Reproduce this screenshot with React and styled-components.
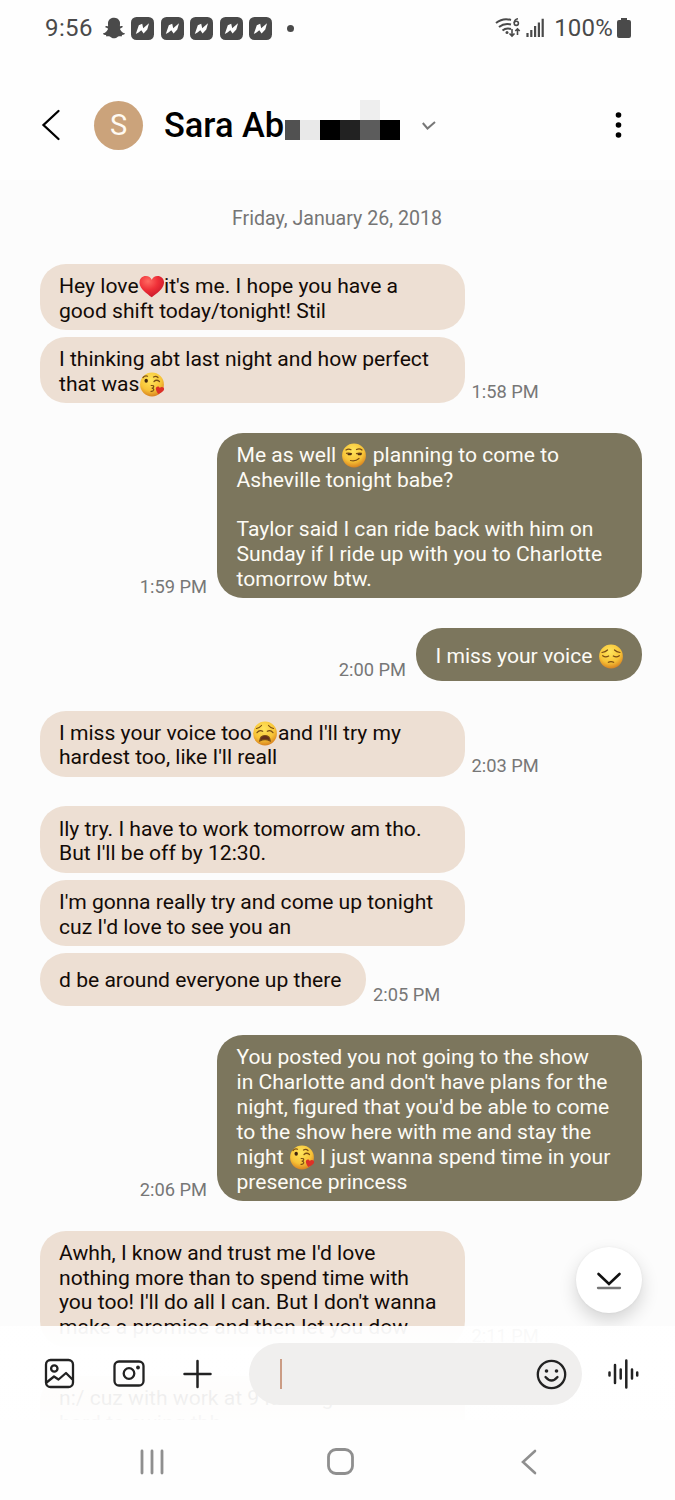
import React from "react";
import styled, { createGlobalStyle } from "styled-components";
import { FaSnapchatGhost } from "react-icons/fa";

const GlobalStyle = createGlobalStyle`
  * {
    box-sizing: border-box;
  }

  body {
    margin: 0;
    background: #ffffff;
    font-family: Roboto, "Liberation Sans", sans-serif;
  }

  svg {
    display: block;
    flex: none;
  }
`;

const Screen = styled.main`
  display: flex;
  flex-direction: column;
  width: 675px;
  height: 1500px;
  overflow: hidden;
  background: #fefefe;
`;

const StatusBar = styled.div`
  display: flex;
  align-items: center;
  justify-content: space-between;
  height: 56px;
  padding: 0 44px 0 45px;
  color: #4a4a4a;
  font-size: 24px;
`;

const StatusGroup = styled.div`
  display: flex;
  align-items: center;
  gap: ${(props) => props.$gap}px;

  .clock {
    width: 51px;
    letter-spacing: 0.4px;
  }
  .dot {
    width: 7px;
    height: 7px;
    margin-left: 8px;
    border-radius: 50%;
    background: #4a4a4a;
  }
  .level {
    margin-left: 5px;
    letter-spacing: 0.2px;
  }
`;

const Header = styled.header`
  display: flex;
  align-items: center;
  height: 124px;
  padding: 14px 45px 0 41px;

  .more {
    margin-left: auto;
  }
`;

const Avatar = styled.div`
  display: flex;
  align-items: center;
  justify-content: center;
  width: 49px;
  height: 49px;
  margin-left: 33px;
  border-radius: 50%;
  background: #cba37b;
  color: #fffaf2;
  font-size: 29px;
`;

const ContactName = styled.h1`
  width: 121px;
  margin: 0 0 0 21px;
  color: #000000;
  font-size: 34.4px;
  font-weight: 500;
  line-height: 40px;
  white-space: nowrap;
`;

const Redaction = styled.div`
  display: grid;
  grid-template-columns: 15px repeat(5, 20px);
  grid-template-rows: 20px 20px;
  margin: 0 22px 10px 0;
`;

const Block = styled.span`
  background: ${(props) => props.$shade};
`;

const Chat = styled.section`
  position: relative;
  display: flex;
  flex-direction: column;
  gap: 29.6px;
  height: 1240px;
  flex: none;
  padding: 26px 33px 0 39.5px;
  overflow: hidden;
  background: #fcfcfc;
`;

const DateLabel = styled.div`
  flex: none;
  height: 28px;
  margin: 0 4px 0 -3.5px;
  color: #757575;
  font-size: 19.6px;
  line-height: 26px;
  text-align: center;
`;

const Group = styled.div`
  display: flex;
  flex: none;
  flex-direction: column;
  gap: 6.8px;
`;

const MessageRow = styled.div`
  display: flex;
  flex-direction: ${(props) => (props.$mine ? "row-reverse" : "row")};
  align-items: flex-end;
  gap: ${(props) => (props.$mine ? "10px" : "7px")};
`;

const Bubble = styled.div`
  flex: none;
  width: ${(props) => props.$width || 425}px;
  padding: ${(props) =>
    props.$single ? "15.5px 19.5px 12.5px" : "10.1px 19.5px 6.6px"};
  border-radius: 26px;
  background: ${(props) => (props.$mine ? "#7c765d" : "#eddfd3")};
  color: ${(props) => (props.$mine ? "#fdfbf5" : "#130b07")};
  font-size: 21.1px;
  line-height: 24.85px;
  white-space: nowrap;

  svg {
    display: inline-block;
    margin: -4px 0 -2px;
    vertical-align: -4px;
  }
`;

const Time = styled.time`
  color: #777777;
  font-size: 18.3px;
  line-height: 22px;
`;

const ScrollButton = styled.button`
  position: absolute;
  top: 1067px;
  right: 33px;
  display: flex;
  align-items: center;
  justify-content: center;
  width: 66px;
  height: 66px;
  padding: 2px 0 0;
  border: 0;
  border-radius: 50%;
  background: #ffffff;
  box-shadow: 0 8px 18px rgba(0, 0, 0, 0.16), 0 0 3px rgba(0, 0, 0, 0.05);
`;

const Composer = styled.footer`
  position: relative;
  display: flex;
  flex: none;
  align-items: flex-start;
  height: 94px;
  margin-top: -94px;
  padding: 17px 34px 0 44px;
  background: linear-gradient(
    rgba(255, 255, 255, 0.94) 0%,
    rgba(255, 255, 255, 0.98) 25%,
    rgba(255, 255, 255, 0.97) 50%,
    rgba(255, 255, 255, 0.93) 75%,
    rgba(255, 255, 255, 0.97) 100%
  );
`;

const Tools = styled.div`
  display: flex;
  align-items: center;
  gap: 38px;
  height: 61px;
`;

const Field = styled.div`
  display: flex;
  align-items: center;
  justify-content: space-between;
  width: 333px;
  height: 62px;
  margin: 0 25px 0 37px;
  padding: 0 15px 0 31px;
  border-radius: 31px;
  background: #f0efee;
`;

const Caret = styled.span`
  width: 2px;
  height: 30px;
  background: #cb9c84;
`;

const NavBar = styled.nav`
  display: flex;
  align-items: center;
  justify-content: space-between;
  height: 80px;
  padding: 3px 138px 0 140px;
  background: #fefefe;

  .home {
    margin-right: 4px;
  }
`;

const Face = ({ children }) => (
  <svg width="26" height="25" viewBox="0 0 26 25">
    <defs>
      <radialGradient id="face" cx="45%" cy="30%" r="70%">
        <stop offset="0" stopColor="#ffe55c" />
        <stop offset="0.65" stopColor="#f7c337" />
        <stop offset="1" stopColor="#d98420" />
      </radialGradient>
    </defs>
    <circle cx="13" cy="12.5" r="11.9" fill="url(#face)" />
    <g fill="none" stroke="#7a4d14" strokeWidth="1.200" strokeLinecap="round">
      {children}
    </g>
  </svg>
);

const Heart = () => (
  <svg width="25.5" height="24" viewBox="0 0 26 24">
    <defs>
      <radialGradient id="heart" cx="35%" cy="25%" r="80%">
        <stop offset="0" stopColor="#ff6b62" />
        <stop offset="0.5" stopColor="#ef3038" />
        <stop offset="1" stopColor="#c5162b" />
      </radialGradient>
    </defs>
    <path
      fill="url(#heart)"
      d="M13 22.500C8 18.500 1 14 .5 7.800C.3 3.500 3.300 .7 7 .7C10 .7 12 2.300 13 4.500C14 2.300 16 .7 19 .7C22.700 .7 25.700 3.500 25.500 7.800C25 14 18 18.500 13 22.500Z"
    />
  </svg>
);

const Kiss = () => (
  <Face>
    <ellipse cx="7.2" cy="8.800" rx="1.700" ry="2" fill="#3f240f" stroke="none" />
    <path d="M4 5.500Q6 3.200 8.500 4.200M14.500 5Q17 3.700 19 5.500M15 9.500Q17.500 7 20.500 9.500" />
    <path d="M12.200 13.500Q15.500 13.300 14.500 15.200Q14 16.200 12.700 16.200Q15.300 16.500 14.600 18.200Q14 19.500 12 19.300" />
    <path
      fill="#dc3027"
      stroke="none"
      d="M19.300 22C16.500 18.500 16 15.600 18.200 14.700C19.500 14.200 20.500 15 20.800 16C21.700 14.800 23.500 14.600 24.500 15.600C26.500 18 23 20.800 19.300 22Z"
    />
  </Face>
);

const Smirk = () => (
  <Face>
    <path d="M5 7Q7.500 5.500 10 6.700M15.500 6.500Q18.500 5 21 7M5.500 10.300Q8 9.600 10.500 10.600M15.500 10.600Q18 9.600 20.500 10.300M9.500 17.500Q14.500 18.700 18 15.500" />
    <path d="M7.500 11.300h2.200M17.500 11.300h2.200" strokeWidth="2" stroke="#4a2c13" />
  </Face>
);

const Pensive = () => (
  <Face>
    <path d="M4 8.500Q7.500 8 9.500 6M16.500 6Q18.500 8 22 8.500M4.700 11.700Q7.500 14 10.700 12M15.300 12Q18.500 14 21.300 11.700M10.300 18.300Q13 16.800 15.700 18.300" />
  </Face>
);

const Weary = () => (
  <Face>
    <path d="M4.500 7.500Q7.500 7 9.500 4.500M16.500 4.500Q18.500 7 21.500 7.500M5 11.700Q7.500 8.500 10.700 10.300M15.300 10.300Q18.500 8.500 21 11.700" />
    <path fill="#66301c" d="M7.800 20Q8 14.500 13 14.500Q18 14.500 18.200 20Q13 17.300 7.800 20Z" />
  </Face>
);

const NewsBadge = () => (
  <svg width="23" height="23" viewBox="0 0 23 23">
    <rect width="23" height="23" rx="5.500" fill="#4a4a4a" />
    <path
      fill="#ffffff"
      d="M4.800 17L7.800 8.300L11.200 6.700L12.200 11.300L18 6.300L16.300 12.500L12.600 16.400L10.300 13.300L7.500 15.500Z"
    />
  </svg>
);

const conversation = [
  {
    time: "1:58 PM",
    bubbles: [
      { text: <>Hey love<Heart />it's me. I hope you have a<br />good shift today/tonight! Stil</> },
      { text: <>I thinking abt last night and how perfect<br />that was<Kiss /></> },
    ],
  },
  {
    mine: true,
    time: "1:59 PM",
    bubbles: [
      {
        text: (
          <>
            Me as well <Smirk /> planning to come to<br />
            Asheville tonight babe?<br />
            <br />
            Taylor said I can ride back with him on<br />
            Sunday if I ride up with you to Charlotte<br />
            tomorrow btw.
          </>
        ),
      },
    ],
  },
  {
    mine: true,
    time: "2:00 PM",
    bubbles: [{ single: true, width: 226, text: <>I miss your voice <Pensive /></> }],
  },
  {
    time: "2:03 PM",
    bubbles: [
      { text: <>I miss your voice too<Weary />and I'll try my<br />hardest too, like I'll reall</> },
    ],
  },
  {
    time: "2:05 PM",
    bubbles: [
      { text: <>lly try. I have to work tomorrow am tho.<br />But I'll be off by 12:30.</> },
      { text: <>I'm gonna really try and come up tonight<br />cuz I'd love to see you an</> },
      { single: true, width: 326.5, text: "d be around everyone up there" },
    ],
  },
  {
    mine: true,
    time: "2:06 PM",
    bubbles: [
      {
        text: (
          <>
            You posted you not going to the show<br />
            in Charlotte and don't have plans for the<br />
            night, figured that you'd be able to come<br />
            to the show here with me and stay the<br />
            night <Kiss /> I just wanna spend time in your<br />
            presence princess
          </>
        ),
      },
    ],
  },
  {
    time: "2:11 PM",
    bubbles: [
      {
        text: (
          <>
            Awhh, I know and trust me I'd love<br />
            nothing more than to spend time with<br />
            you too! I'll do all I can. But I don't wanna<br />
            make a promise and then let you dow
          </>
        ),
      },
    ],
  },
  {
    bubbles: [{ text: <>n:/ cuz with work at 9 it being<br />hard to swing tbh</> }],
  },
];

const shades = [
  "transparent", "transparent", "transparent", "transparent", "#eeeeee", "transparent",
  "#515151", "#e9e9e9", "#000000", "#222222", "#5c5c5c", "#000000",
];

const App = () => {
  return (
    <Screen>
      <GlobalStyle />
      <StatusBar>
        <StatusGroup $gap={6.5}>
          <span className="clock">9:56</span>
          <FaSnapchatGhost size={22} />
          {[0, 1, 2, 3, 4].map((item) => (
            <NewsBadge key={item} />
          ))}
          <span className="dot" />
        </StatusGroup>
        <StatusGroup $gap={4}>
          <svg width="27" height="22" viewBox="0 0 27 22" fill="none" stroke="#4a4a4a" strokeWidth="2">
            <path d="M1 6Q8 .5 16 3M4 10Q9.500 5.500 16 7.500M7.500 13.500Q11 10.500 16 12" />
            <circle cx="12" cy="15.500" r="1.500" fill="#4a4a4a" stroke="none" />
            <path d="M17 12V19M14.500 16.500L17 19L19.500 16.500M22.500 18V12M20.300 14L22.500 11.800L24.700 14" strokeWidth="1.600" />
            <path d="M23 1.700Q19.500 2 19.200 6" strokeWidth="1.600" />
            <circle cx="21.300" cy="6.300" r="2.100" strokeWidth="1.600" />
          </svg>
          <svg width="19" height="20" viewBox="0 0 19 20" stroke="#4a4a4a" strokeWidth="2.200">
            <path d="M1.500 19V15M5.300 19V12M9.100 19V8M12.900 19V4.500M16.700 19V.8" />
          </svg>
          <span className="level">100%</span>
          <svg width="14" height="20" viewBox="0 0 14 20" fill="#4a4a4a">
            <path d="M4 0H10V2H12Q14 2 14 4V18Q14 20 12 20H2Q0 20 0 18V4Q0 2 2 2H4Z" />
          </svg>
        </StatusGroup>
      </StatusBar>

      <Header>
        <svg width="20" height="32" viewBox="0 0 20 32" fill="none" stroke="#000" strokeWidth="2.300" strokeLinecap="round">
          <path d="M17.500 2L2.500 16L17.500 30" />
        </svg>
        <Avatar>S</Avatar>
        <ContactName>Sara Ab</ContactName>
        <Redaction>
          {shades.map((shade, index) => (
            <Block key={index} $shade={shade} />
          ))}
        </Redaction>
        <svg width="14" height="10" viewBox="0 0 14 10" fill="none" stroke="#777" strokeWidth="2">
          <path d="M.8 3L5.500 8.500L13 2" />
        </svg>
        <svg className="more" width="24" height="28" viewBox="0 0 24 28">
          <circle cx="12.500" cy="4" r="2.800" />
          <circle cx="12.500" cy="14" r="2.800" />
          <circle cx="12.500" cy="24" r="2.800" />
        </svg>
      </Header>

      <Chat>
        <DateLabel>Friday, January 26, 2018</DateLabel>
        {conversation.map((group, index) => (
          <Group key={index}>
            {group.bubbles.map((bubble, i) => (
              <MessageRow key={i} $mine={group.mine}>
                <Bubble $mine={group.mine} $single={bubble.single} $width={bubble.width}>
                  {bubble.text}
                </Bubble>
                {i === group.bubbles.length - 1 && <Time>{group.time}</Time>}
              </MessageRow>
            ))}
          </Group>
        ))}
        <ScrollButton aria-label="Jump to latest">
          <svg width="26" height="20" viewBox="0 0 26 20" fill="none" strokeLinecap="round">
            <path d="M2.500 3L13 13L23.500 3" stroke="#111" strokeWidth="2.600" />
            <path d="M2 17H24" stroke="#777" strokeWidth="2.300" />
          </svg>
        </ScrollButton>
      </Chat>

      <Composer>
        <Tools>
          <svg width="31" height="31" viewBox="0 0 31 31" fill="none" stroke="#222" strokeWidth="2.300" strokeLinejoin="round">
            <rect x="2" y="2" width="27" height="27" rx="4.500" />
            <circle cx="10.300" cy="10.500" r="3.200" />
            <path d="M2.500 24.500L10 18.500L14.500 21.500L22 15L28.500 21.500" />
          </svg>
          <svg width="32" height="27" viewBox="0 0 32 27" fill="none" stroke="#222" strokeWidth="2.300">
            <rect x="1.500" y="1.500" width="29" height="24" rx="4.500" />
            <circle cx="16" cy="13.500" r="5.300" />
            <circle cx="25" cy="7.500" r="1.900" fill="#222" stroke="none" />
          </svg>
          <svg width="29" height="30" viewBox="0 0 29 30" stroke="#222" strokeWidth="2.500" strokeLinecap="round">
            <path d="M14.500 2V28M1.500 15H27.500" />
          </svg>
        </Tools>
        <Field>
          <Caret />
          <svg width="31" height="31" viewBox="0 0 31 31" fill="none" stroke="#222" strokeWidth="2.300" strokeLinecap="round">
            <circle cx="15.500" cy="15.500" r="13.700" />
            <circle cx="10.500" cy="12" r="1.800" fill="#222" stroke="none" />
            <circle cx="20.500" cy="12" r="1.800" fill="#222" stroke="none" />
            <path d="M9.500 18Q15.500 25 21.500 18" />
          </svg>
        </Field>
        <Tools>
          <svg width="32" height="32" viewBox="0 0 32 32" stroke="#222" strokeWidth="2.500" strokeLinecap="round">
            <path d="M2.500 14.500V17.500M8 7V25M13.700 11.500V20.500M19.300 2.500V29.500M25 11.500V20.500M30.200 14.500V17.500" />
          </svg>
        </Tools>
      </Composer>

      <NavBar>
        <svg width="24" height="26" viewBox="0 0 24 26" stroke="#8f8f8f" strokeWidth="2.800" strokeLinecap="round">
          <path d="M2 2V24M12 2V24M22 2V24" />
        </svg>
        <svg className="home" width="27" height="27" viewBox="0 0 27 27" fill="none" stroke="#8f8f8f" strokeWidth="2.800">
          <rect x="1.500" y="1.500" width="24" height="24" rx="7.500" />
        </svg>
        <svg width="16" height="26" viewBox="0 0 16 26" fill="none" stroke="#8f8f8f" strokeWidth="2.600" strokeLinecap="round">
          <path d="M14 2L2 13L14 24" />
        </svg>
      </NavBar>
    </Screen>
  );
};

export default App;
